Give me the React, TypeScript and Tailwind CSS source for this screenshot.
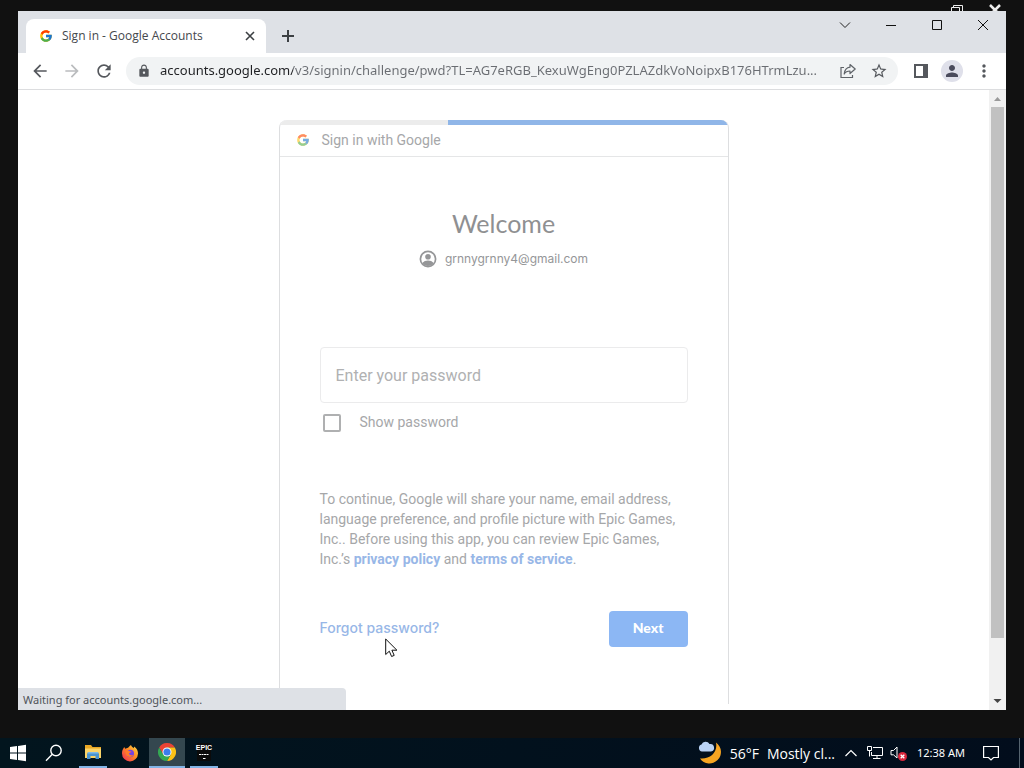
import React, { useState } from 'react';
import { FcGoogle } from 'react-icons/fc';
import {
  MdArrowBack,
  MdArrowForward,
  MdLock,
  MdMoreVert,
  MdPerson,
  MdRefresh,
  MdStarBorder,
} from 'react-icons/md';

// --- ICONS ---

const ShareIcon = () => (
  <svg className="h-4 w-4" viewBox="0 0 16 16" fill="none" stroke="#5f6368" strokeWidth="1.2">
    <path d="M4 4.500H1v10h11.500v-2.500" />
    <path d="M10 1.500l5.200 4.500L10 10.500V8C7.400 8 5.500 8.800 4.200 11 4.600 7.200 6.500 4.600 10 4.200z" strokeLinejoin="round" />
  </svg>
);

const SidePanelIcon = () => (
  <svg className="h-3.5 w-3.5" viewBox="0 0 14 14">
    <path d="M0 0h14v14H0z" fill="#55585d" />
    <path d="M2 2h7v10H2z" fill="#fff" />
  </svg>
);

const AccountIcon = () => (
  <svg className="h-[18px] w-[18px]" viewBox="0 0 18 18">
    <circle cx="9" cy="9" r="7.600" fill="none" stroke="#959698" strokeWidth="1.700" />
    <circle cx="9" cy="6.800" r="2.800" fill="#959698" />
    <path d="M3.300 13c1.400-1.700 3.500-2.500 5.700-2.500s4.300.8 5.700 2.500c-1.400 1.900-3.400 3-5.700 3s-4.300-1.100-5.700-3z" fill="#959698" />
  </svg>
);

const WindowsIcon = () => (
  <svg className="h-[18px] w-[18px]" viewBox="0 0 18 18" fill="#fff">
    <path d="M1 3l7-1v6.500H1zM9 1.900L17 .7v7.800H9zM1 9.500h7V16l-7-1zM9 9.500h8v7.800l-8-1.200z" />
  </svg>
);

const SearchIcon = () => (
  <svg className="h-[18px] w-[18px]" viewBox="0 0 18 18" fill="none" stroke="#fff" strokeWidth="1.400">
    <circle cx="11" cy="6.500" r="5.200" />
    <path d="M7.300 10.300L1 16.800" />
  </svg>
);

const FolderIcon = () => (
  <svg className="h-[18px] w-[18px]" viewBox="0 0 18 18">
    <path d="M1 2h6l1.500 2H17v4H1z" fill="#e9a825" />
    <path d="M1 5.500h16V15H1z" fill="#fbd468" />
    <path d="M4 9h10l1 2v5h-3.500v-3h-5v3H3v-5z" fill="#4a94d0" />
    <path d="M4 9h10v1.500H4z" fill="#7cb9e8" />
  </svg>
);

const FirefoxIcon = () => (
  <svg className="h-[18px] w-[18px]" viewBox="0 0 18 18">
    <defs>
      <linearGradient id="fox" x1="1" y1="0" x2="0" y2="1">
        <stop offset="0" stopColor="#ffe14a" />
        <stop offset=".45" stopColor="#ff8a22" />
        <stop offset="1" stopColor="#f0245c" />
      </linearGradient>
    </defs>
    <path d="M2.200 4.800L3.200 3l1 1.700 2-.6C7.500 4 8 2.500 10 1c.3 1.600 1.600 2.200 2.800 3.200L13 2.500c3 2 4 4.500 4 7A8 8 0 0 1 9 17.400a8 8 0 0 1-8-8c0-1.800.4-3.400 1.200-4.600z" fill="url(#fox)" />
    <circle cx="9.300" cy="9.500" r="3.700" fill="#7542e5" />
    <path d="M4.500 6.500c1.500-.6 3-.2 4 .8l2 .2c-.4 1.200-2 1-2.600 2 .5 1.700 2.600 2.200 4.400 1.200-1 3-6 3-7.300-.4-.6-1.400-.7-2.600-.5-3.800z" fill="#ff7a2b" />
  </svg>
);

const ChromeIcon = () => (
  <svg className="h-[18px] w-[18px]" viewBox="0 0 48 48">
    <path d="M24 12h20.800A24 24 0 0 0 3.200 12l10.400 18z" fill="#ea4335" />
    <path d="M34.400 30L24 48a24 24 0 0 0 20.800-36H24z" fill="#fbc116" />
    <path d="M13.600 30L3.200 12A24 24 0 0 0 24 48l10.400-18z" fill="#34a853" />
    <circle cx="24" cy="24" r="12" fill="#fff" />
    <circle cx="24" cy="24" r="9.500" fill="#3b7ded" />
  </svg>
);

const EpicIcon = () => (
  <span className="flex h-[18px] w-3.5 flex-col items-center bg-[#0b0b0b] text-white">
    <span className="font-['Liberation_Sans_Narrow','Liberation_Sans',sans-serif] text-[7px] leading-[10px] font-bold">EPIC</span>
    <svg className="h-2 w-2.5" viewBox="0 0 10 8" stroke="#fff">
      <path d="M0 1.500h10" strokeDasharray="2 .5" />
      <path d="M4 5.500h2.500" />
    </svg>
  </span>
);

const WeatherIcon = () => (
  <svg className="h-6 w-6" viewBox="0 0 24 24">
    <path d="M18 1.500A11.500 11.500 0 1 1 2 17.500C12 18.500 20 11.500 18 1.500z" fill="#f7a521" />
    <path d="M4 10.500a3.600 3.600 0 0 1-.5-7 4.400 4.400 0 0 1 8-.5 3.800 3.800 0 0 1 1.500 7.500z" fill="#b9d3f6" />
  </svg>
);

const NetworkIcon = () => (
  <svg className="h-4 w-4" viewBox="0 0 16 16" fill="none" stroke="#fff">
    <path d="M6 2.500h9.500v8H4.500V7M10 10.500v3M6 13.500h7.500" />
    <path d="M.5 1.500h4v4h-4zM2.500 5.500v6" />
  </svg>
);

const VolumeIcon = () => (
  <svg className="h-4 w-[18px]" viewBox="0 0 18 16">
    <path d="M1 5.500h2.500L7 2v11L3.500 9.800H1z" fill="none" stroke="#fff" />
    <circle cx="12.500" cy="11.500" r="4.500" fill="#d9263c" />
    <path d="M10.700 9.700l3.600 3.600m0-3.600l-3.600 3.600" stroke="#fff" strokeWidth="1.300" />
  </svg>
);

// --- BROWSER CHROME ---

const TabStrip = () => (
  <div className="flex h-[42px] items-end bg-[#dee1e6] pl-2">
    <div className="flex h-[34px] w-60 items-center rounded-t-lg bg-white pr-2 pl-[13px]">
      <FcGoogle className="h-3.5 w-3.5" />
      <span className="ml-[9px] flex-1 text-xs text-[#45484d]">Sign in - Google Accounts</span>
      <button aria-label="Close tab" className="flex h-4 w-4 items-center justify-center">
        <svg className="h-2.5 w-2.5" viewBox="0 0 10 10" stroke="#3c4043" strokeWidth="1.600">
          <path d="M1 1l8 8M9 1l-8 8" />
        </svg>
      </button>
    </div>
    <button aria-label="New tab" className="ml-3.5 flex h-[34px] w-4 items-center justify-center">
      <svg className="h-3 w-3" viewBox="0 0 12 12" stroke="#3c4043" strokeWidth="2">
        <path d="M6 0v12M0 6h12" />
      </svg>
    </button>
    <div className="ml-auto flex h-full items-start">
      <button aria-label="Search tabs" className="flex h-7 w-[46px] items-center justify-center">
        <svg className="h-3 w-3" viewBox="0 0 12 12" fill="none" stroke="#222"><path d="M1 3.500l5 5 5-5" /></svg>
      </button>
      <button aria-label="Minimize" className="flex h-7 w-[46px] items-center justify-center">
        <svg className="h-3 w-3" viewBox="0 0 12 12" stroke="#111"><path d="M1 6.500h10" /></svg>
      </button>
      <button aria-label="Maximize" className="flex h-7 w-[46px] items-center justify-center">
        <svg className="h-3 w-3" viewBox="0 0 12 12" fill="none" stroke="#111"><path d="M1.500 1.500h9v9h-9z" /></svg>
      </button>
      <button aria-label="Close" className="flex h-7 w-[46px] items-center justify-center">
        <svg className="h-3 w-3" viewBox="0 0 12 12" stroke="#111"><path d="M1 1l10 10M11 1L1 11" /></svg>
      </button>
    </div>
  </div>
);

const Toolbar = () => (
  <div className="flex h-[37px] items-center border-b border-[#dcdddf] bg-white px-3 text-[#55585d]">
    <button aria-label="Back"><MdArrowBack className="h-5 w-5" /></button>
    <button aria-label="Forward" className="ml-3 text-[#babcbe]"><MdArrowForward className="h-5 w-5" /></button>
    <button aria-label="Reload" className="ml-3"><MdRefresh className="h-5 w-5" /></button>
    <div className="ml-3 flex h-7 min-w-0 flex-1 items-center rounded-full bg-[#f1f3f4] pr-2.5 pl-[11px]">
      <MdLock className="h-3.5 w-3.5 shrink-0" />
      {/* host part is darker than the path */}
      <input
        aria-label="Address"
        className="ml-[9px] min-w-0 flex-1 bg-[linear-gradient(90deg,#202124_133px,#6a6d72_133px)] bg-clip-text font-['Noto_Sans',sans-serif] text-[13px] text-transparent outline-none"
        defaultValue="accounts.google.com/v3/signin/challenge/pwd?TL=AG7eRGB_KexuWgEng0PZLAZdkVoNoipxB176HTrmLzu..."
      />
      <button aria-label="Share" className="ml-2"><ShareIcon /></button>
      <button aria-label="Bookmark" className="ml-3.5"><MdStarBorder className="h-[18px] w-[18px]" /></button>
    </div>
    <button aria-label="Side panel" className="ml-4"><SidePanelIcon /></button>
    <button aria-label="Profile" className="ml-[13px] flex h-[22px] w-[22px] items-center justify-center rounded-full bg-[#dfe0ea] text-[#4a4b5c]">
      <MdPerson className="h-[18px] w-[18px]" />
    </button>
    <button aria-label="Menu" className="ml-[11px]"><MdMoreVert className="h-5 w-5" /></button>
  </div>
);

const ScrollBar = () => (
  <div className="flex w-[17px] shrink-0 flex-col items-center bg-[#f1f1f1]">
    <svg className="h-[17px] w-[17px]" viewBox="0 0 17 17"><path d="M5 11l3.500-4 3.500 4z" fill="#9a9a9a" /></svg>
    <div className="w-[13px] grow-[531] bg-[#c1c1c1]" />
    <div className="grow-[55]" />
    <svg className="h-[17px] w-[17px]" viewBox="0 0 17 17"><path d="M4.500 6l4 4 4-4z" fill="#444" /></svg>
  </div>
);

// --- SIGN IN PAGE ---

const SignInCard = () => {
  const [show, setShow] = useState(false);

  return (
    <form
      className="flex w-[450px] flex-col overflow-hidden rounded-t-lg border-x border-[#dddee0] bg-white font-['Roboto',sans-serif] text-sm text-[#a6a7a9]"
      onSubmit={(e) => e.preventDefault()}
    >
      <div className="flex h-[5px] bg-[#ececec]">
        <div className="ml-auto h-full w-[280px] bg-[#90b6e8]" />
      </div>
      <div className="flex h-8 items-center border-b border-[#e5e6e7] px-4 pb-0.5">
        <FcGoogle className="h-3.5 w-3.5 opacity-60" />
        <span className="ml-3">Sign in with Google</span>
      </div>

      <div className="flex-1 px-10 pt-[50px]">
        <h1 className="text-center font-['Lato',sans-serif] text-[25px] leading-8 text-[#8f9092]">Welcome</h1>
        <div className="mt-[11px] flex h-[18px] items-center justify-center gap-2 font-['Inter',sans-serif] text-xs text-[#959698]">
          <AccountIcon />
          <span>grnnygrnny4@gmail.com</span>
        </div>

        <input
          type={show ? 'text' : 'password'}
          aria-label="Enter your password"
          placeholder="Enter your password"
          className="mt-[79px] block h-14 w-full rounded border border-[#ebebec] px-[15px] text-base outline-none placeholder:text-[#b0b1b2]"
        />
        <label className="mt-2.5 flex h-5 items-center pl-[3px]">
          <input
            type="checkbox"
            checked={show}
            onChange={(e) => setShow(e.target.checked)}
            className="h-[18px] w-[18px] appearance-none rounded-xs border-2 border-[#afb0b1] checked:bg-[#8ab4f0]"
          />
          <span className="ml-[19px] pb-0.5">Show password</span>
        </label>

        <p className="mt-14 leading-5">
          To continue, Google will share your name, email address, language preference, and profile
          picture with Epic Games, Inc.. Before using this app, you can review Epic Games,
          Inc.’s <a href="#privacy" className="font-bold text-[#98b7e7]">privacy policy</a> and{' '}
          <a href="#terms" className="font-bold text-[#98b7e7]">terms of service</a>.
        </p>

        <div className="mt-[42px] flex items-center justify-between">
          <a href="#forgot" className="pb-0.5 font-['Inter',sans-serif] font-medium text-[#98b7e7]">Forgot password?</a>
          <button type="submit" className="h-9 rounded bg-[#8cb7f4] px-6 pb-0.5 font-['Lato',sans-serif] font-black text-white">Next</button>
        </div>
      </div>
    </form>
  );
};

// --- TASKBAR ---

const Taskbar = () => (
  <footer className="flex h-[30px] items-center bg-linear-to-r from-[#02151e] to-[#020d1c] text-white">
    <button aria-label="Start" className="flex h-full w-9 items-center justify-center"><WindowsIcon /></button>
    <button aria-label="Search" className="flex h-full w-9 items-center justify-center"><SearchIcon /></button>
    <button aria-label="File Explorer" className="ml-[7px] flex h-full w-7 items-center justify-center border-b-2 border-[#82b4e6]"><FolderIcon /></button>
    <button aria-label="Firefox" className="ml-1 flex h-full w-[38px] items-center justify-center"><FirefoxIcon /></button>
    <button aria-label="Chrome" className="flex h-full w-9 items-center justify-center border-b-2 border-[#82b4e6] bg-[#34474f]"><ChromeIcon /></button>
    <button aria-label="Epic Games" className="ml-[5px] flex h-full w-7 items-center justify-center border-b-2 border-[#82b4e6]"><EpicIcon /></button>

    <div className="ml-auto flex h-full items-center">
      <button className="flex items-center text-sm">
        <WeatherIcon />
        <span className="mt-0.5 ml-2">56°F</span>
        <span className="mt-0.5 ml-2">Mostly cl...</span>
      </button>
      <button aria-label="Show hidden icons" className="ml-2.5">
        <svg className="h-3 w-3" viewBox="0 0 12 12" fill="none" stroke="#fff" strokeWidth="1.200"><path d="M.5 9L6 3.500 11.500 9" /></svg>
      </button>
      <button aria-label="Network" className="ml-2.5"><NetworkIcon /></button>
      <button aria-label="Volume" className="ml-[7px]"><VolumeIcon /></button>
      <time className="ml-[9px] font-['Noto_Sans',sans-serif] text-[11px]">12:38 AM</time>
      <button aria-label="Notifications" className="ml-[18px]">
        <svg className="h-4 w-4" viewBox="0 0 16 16" fill="none" stroke="#fff" strokeWidth="1.200">
          <path d="M.6 1.500h14.800v11H10.500L8 15l-2.500-2.500H.6z" />
        </svg>
      </button>
      <div className="ml-5 h-full w-[5px] border-l border-[#56646f]" />
    </div>
  </footer>
);

const App: React.FC = () => (
  <div className="relative flex h-screen flex-col bg-[#111] font-['Open_Sans',sans-serif]">
    {/* caption buttons of the window behind */}
    <svg className="absolute top-[3px] right-5 h-4 w-[54px]" viewBox="0 0 54 16" fill="none" stroke="#eee">
      <path d="M1.500 4.500h8v6h-8zM3.500 4V2.500h9V9" />
      <path d="M40 2l10 10M50 2L40 12" strokeWidth="2.500" />
    </svg>

    <div className="relative mx-[18px] mt-[11px] mb-7 flex min-h-0 flex-1 flex-col bg-white">
      <TabStrip />
      <Toolbar />
      <div className="flex min-h-0 flex-1">
        <main className="flex flex-1 justify-center pt-[30px] pb-1.5">
          <SignInCard />
        </main>
        <ScrollBar />
      </div>
      <div className="absolute bottom-0 left-0 flex h-[22px] w-[328px] items-center rounded-tr bg-[#dee1e6] px-[5px] pt-0.5 font-['Noto_Sans',sans-serif] text-[11px] text-[#50545a]">
        Waiting for accounts.google.com...
      </div>
    </div>

    <Taskbar />

    {/* mouse pointer */}
    <svg className="absolute top-[638px] left-[385px] h-5 w-3.5" viewBox="0 0 14 20" fill="#fff" stroke="#111">
      <path d="M.7 1v15.500l3.600-3.300 2.300 5.300 2.600-1.100-2.300-5.200h5z" />
    </svg>
  </div>
);

export default App;
